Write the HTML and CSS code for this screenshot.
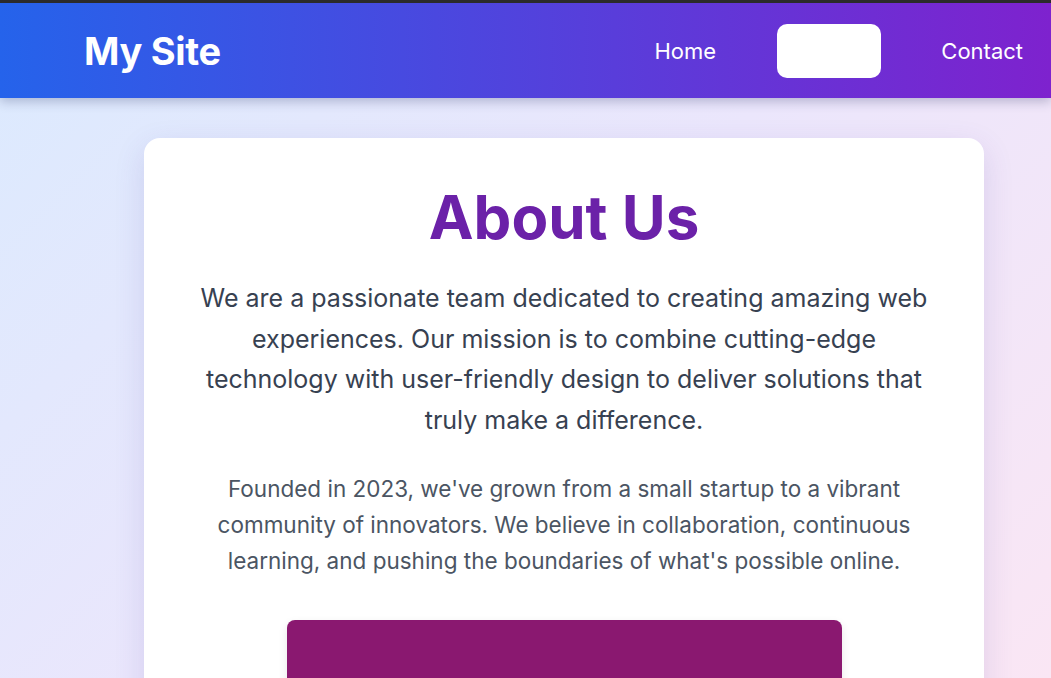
FILE: index.html
```html
<!DOCTYPE html>
<html lang="en">
<head>
<meta charset="utf-8">
<title>My Site</title>
<link rel="stylesheet" href="styles.css">
</head>
<body>
<header class="site-header">
  <div class="logo">My Site</div>
  <nav class="nav">
    <a class="nav-link" href="#">Home</a>
    <a class="nav-link active" href="#">About</a>
    <a class="nav-link" href="#">Contact</a>
  </nav>
</header>
<main class="main">
  <section class="card">
    <h1 class="title">About Us</h1>
    <p class="lead">We are a passionate team dedicated to creating amazing web experiences. Our mission is to combine cutting-edge technology with user-friendly design to deliver solutions that truly make a difference.</p>
    <p class="body-text">Founded in 2023, we've grown from a small startup to a vibrant community of innovators. We believe in collaboration, continuous learning, and pushing the boundaries of what's possible online.</p>
    <div class="cta"></div>
  </section>
</main>
</body>
</html>
```
FILE: styles.css
```css
* { box-sizing: border-box; }
html, body { margin: 0; height: 100%; }
body {
  font-family: Inter, "Noto Sans", sans-serif;
  background: linear-gradient(135deg, #dbeafe 0%, #ebe6fc 50%, #fae6f4 100%);
  overflow: hidden;
}
.site-header {
  height: 98px;
  border-top: 3px solid #2b2b2b;
  background: linear-gradient(90deg, #2563eb 0%, #7e22ce 100%);
  display: flex;
  align-items: center;
  justify-content: space-between;
  padding: 0 8px 0 84px;
  box-shadow: 0 4px 10px rgba(30, 40, 90, 0.25);
  position: relative;
  z-index: 2;
}
.logo {
  color: #fff;
  font-weight: 700;
  font-size: 38px;
  letter-spacing: -0.3px;
}
.nav { display: flex; align-items: center; gap: 40px; }
.nav-link {
  color: #fff;
  text-decoration: none;
  font-size: 22px;
  padding: 0 20px;
  height: 54px;
  line-height: 54px;
  border-radius: 10px;
  min-width: 104px;
  text-align: center;
}
.nav-link.active { background: #fff; color: #fff; }
.main { padding: 40px 0 0 144px; }
.card {
  width: 840px;
  background: #fff;
  border-radius: 16px;
  padding: 43px 48px 60px;
  box-shadow: 0 10px 30px rgba(80, 60, 160, 0.15);
  text-align: center;
}
.title {
  margin: 0 0 25px;
  font-size: 60px;
  line-height: 72px;
  font-weight: 700;
  color: #6b21a8;
}
.lead {
  margin: 0 0 30px;
  font-size: 25px;
  line-height: 40.7px;
  color: #374151;
}
.body-text {
  margin: 0 0 41px;
  font-size: 22.5px;
  line-height: 36px;
  color: #4b5563;
}
.cta {
  width: 555px;
  height: 120px;
  margin: 0 auto;
  background: #8a1870;
  border-radius: 8px;
  box-shadow: 0 4px 10px rgba(0,0,0,0.1);
}
```
